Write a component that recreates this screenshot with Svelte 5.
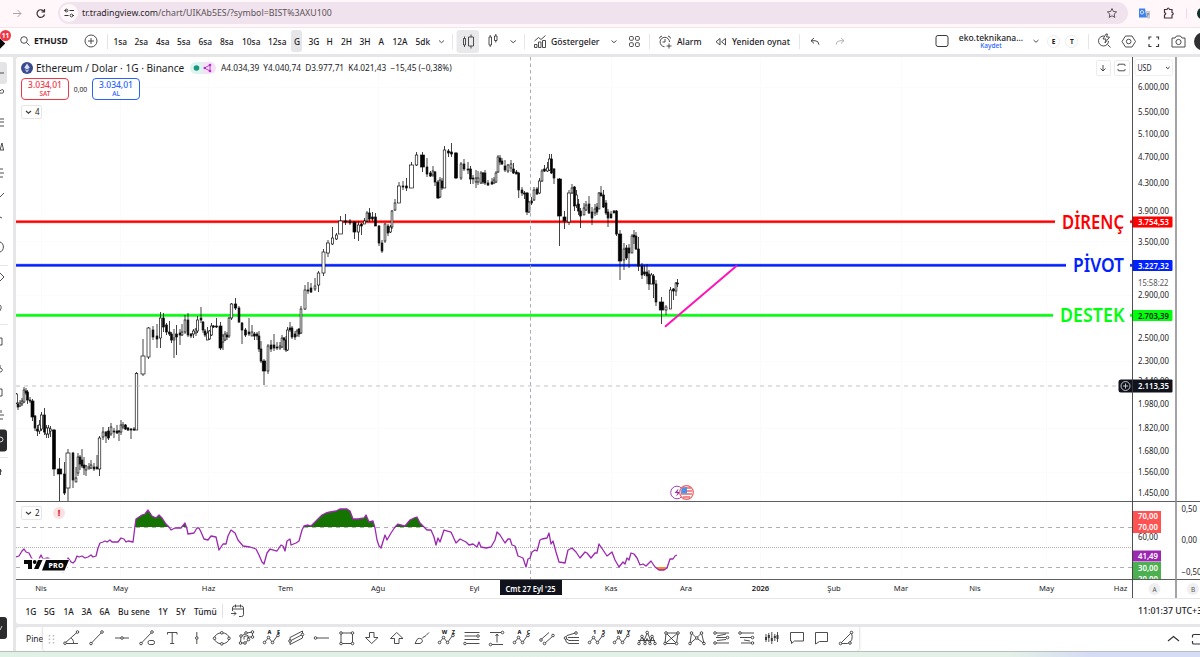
<script>
  const intervals = [
    ['1sa', 21], ['2sa', 21.5], ['4sa', 21], ['5sa', 21.5], ['6sa', 21.5], ['8sa', 22],
    ['10sa', 26], ['12sa', 26], ['G', 14.5], ['3G', 18], ['H', 14.5], ['2H', 18.5],
    ['3H', 19], ['A', 14], ['12A', 23], ['5dk', 22],
  ];

  const ranges = [
    ['1G', 18.5], ['5G', 19.5], ['1A', 18], ['3A', 18], ['6A', 18.5], ['Bu sene', 40],
    ['1Y', 18], ['5Y', 18], ['Tümü', 28],
  ];

  const prices = [
    ['6.000,00', 87], ['5.500,00', 112], ['5.100,00', 134], ['4.700,00', 157], ['4.300,00', 183],
    ['3.900,00', 210.5], ['3.500,00', 241.5], ['2.900,00', 295], ['2.500,00', 337.5],
    ['2.300,00', 361], ['1.980,00', 404], ['1.820,00', 428], ['1.680,00', 450.5],
    ['1.560,00', 472], ['1.450,00', 493],
  ];

  const months = [
    ['Nis', 41], ['May', 120.5], ['Haz', 208.5], ['Tem', 285.5], ['Ağu', 378], ['Eyl', 474.5],
    ['Kas', 611], ['Ara', 686], ['2026', 760.5], ['Şub', 834], ['Mar', 901], ['Nis', 975],
    ['May', 1046.5], ['Haz', 1120.5],
  ];

  const levels = [
    { name: 'DİRENÇ', price: '3.754,53', y: 221.7, end: 1055, x: 1062, w: 62, color: '#ff0000', soft: '#ff9a9a', ink: '#fff' },
    { name: 'PİVOT', price: '3.227,32', y: 265.3, end: 1066, x: 1073, w: 51, color: '#0022ff', soft: '#7f8cf8', ink: '#fff' },
    { name: 'DESTEK', price: '2.703,39', y: 315.3, end: 1053, x: 1060, w: 64.5, color: '#00ff0d', soft: '#79ee7e', ink: '#102010' },
  ];

  // x, high, top, bottom, low, filled, width
  const candles = [
    [16.5,393,394,403,404,0],[18,402,404,407,410,1],[20,400,403,406,407,0],[22,398,401,404,406,0],
    [24,387,390,402,403,0],[26,388,391,393,395,1],[27.5,390,392,400,404,1],[30,397,400,401,403,1],
    [32.5,399,401,417,421,1,3],[35,415,416,428,431,1],[37.5,425,429,431,436,1],[39.5,420,425,431,434,0],
    [41.5,412,415,429,431,0],[44.5,408,415,432,435,1],[46.5,425,428,434,438,0],[48.5,425,428,434,438,0],
    [50.5,426,429,431,437,0],[54,429,430,469,476,1,3],[59.5,458,469,474,501,1,4.5],[64.5,462,474,493,495,1],
    [68,449,453,488,501,0,4],[73,452,453,480,488,1],[76,467,478,482,482,0],[78,453,457,473,476,0],
    [80,455,457,464,470,1],[82,449,460,466,468,1],[84,457,465,468,475,1],[86,465,466,470,476,0],
    [89,463,467,469,469,0],[91,460,465,468,469,0],[94,463,467,469,471,1],[97,455,467,469,469,1],
    [99.5,436,438,469,476,0,2.5],[103,427,432,437,440,0],[106,431,432,436,443,1],[108.5,427,431,438,440,1],
    [111,423,427,434,436,0],[114,428,431,432,438,1],[117,425,431,433,434,1],[119,430,431,432,441,1],
    [121,420,425,432,435,0],[123,422,425,427,429,0],[125.5,424,425,429,430,1],[128,427,428,430,431,1],
    [131,428,429,430,439,1],[134,427,429,430,431,1],[136.5,372,373.5,430,430,0,2.5],[143,339,356,374,376,0,4],
    [148.5,327,328,357,359,0,3],[153,326,330,337,340,1],[157,324,336,339,348,1],[160.5,312,318,338,348,0],
    [163.5,313,318,327,332,1],[166.5,323,325,332,335,1],[169.5,321,332,334,336,1],[171.5,332,334,340,343,1],
    [174,329,338,340,358,0],[176.5,325,334,337,355,1],[180,329,333,335,345,1],[182,324,332,335,336,0],
    [185,315,320,332,334,0],[188,313,320,335,337,1],[191,333,334,336,338,1],[193.5,329,331,334,338,0],
    [196,328,329,333,336,0],[197.5,316,320,331,333,0],[201,307,318,320,323,1],[203,321,322,330,333,1],
    [205,329,331,335,337,1],[207.5,327,333,340,340,0],[209.5,330,331,339,340,0],[211.5,323,326,335,336,0],
    [213.5,325,326,327,328,1],[216.5,318,326,327,328,1],[220.5,322,326,348,350,1,3],[223,334,336,342,350,0],
    [225,331,334,340,341,0],[227,332,335,337,340,1],[229,317,318,336,338,0],[231.5,303,304,318,320,0,2.5],
    [235.5,298,304,308,310,1,2.5],[239,306,308,322,323,1],[242,322,323,330,344,1],[245.5,328,330,335,337,1],
    [249,318,332,334,336,1],[252,325,332,336,336,0],[254.5,332,334,336,340,1],[257,332,334,336,340,1],
    [259,331,336,349,352,1],[261,341,349,361,363,1],[264,359,361,371,385,1,3.5],[268,344,346,371,374,0],
    [271,340,345,349,352,1],[274,334,345,348,351,1],[277,342,347,348,350,1],[280,342,346,348,350,0],
    [282,335,338,347,348,0],[284,337,338,340,350,1],[286,336,340,350,352,1],[287.5,327,330,350,351,0],
    [290,322,328,330,332,1],[292,326,328,337,339,1],[295,331,334,337,340,1],[297,329,331,336,336,0],
    [299,328,329,334,337,1],[301,306,309,333,334,0],[305,285,290,309,310,0,2],[308,282,290,291,294,1],
    [311,283,288,292,293,1],[315,278,286,289,291,0],[318.5,271,273,285,292,0,2.5],[323.5,249,252,273,276,0,3],
    [328,240,243,253,257,0,3],[332.5,227,238,244,245,0],[336.5,233,235,239,240,0],[340.5,216,221,234,234,0,4],
    [345.5,214,221,222,225,1,3],[350,219,221,223,225,1],[354.5,221,222,232,239,1,3],[358.5,221,225,232,241,0],
    [361.5,223,224,226,235,1],[364.5,218,221,224,224,0],[367,211,213,221,222,0],[369.5,208,213,219,222,1],
    [372.5,212,217,219,221,1],[375.5,213,217,226,226,1],[379,225,226,243,246,1],[382,240,243,251,253,1],
    [385,223,224,241,243,0],[388,224,226,233,236,1],[390.5,225,227,232,233,0],[392,210,211,227,229,0],
    [395,199,203,210,211,0],[399,182,186,203,203,0,3],[403,181,186,187,190,1],[406.5,178,186,188,191,1],
    [411.5,162,165,188,188,0,4],[416.5,152,155,165,166,0,2.5],[422.5,152,155,167,172,1,4],[427,158,167,174,177,1],
    [430.5,171,173,176,177,1],[433,166,171,175,177,0],[435,171,172,182,186,1],[438,180,182,198,199,1,2.5],
    [440,177,180,197,198,0],[442,178,181,188,190,1],[444.5,146,150,188,188,0,2.5],[448.5,149,151,153,157,1],
    [451.5,143,152,154,157,1],[456,152,153,178,179,1,3],[461,162,164,178,180,0],[464,159,164,169,171,1],
    [468,162,169,170,174,1],[470.5,166,169,179,184,1],[473,175,178,179,184,1],[476,170,178,182,188,0],
    [478,171,178,182,185,0],[481,171,173,183,184,0],[483,172,173,182,184,1],[485,170,173,183,185,1],
    [488,180,183,185,186,1],[492,178,182,184,185,1],[494,177,180,183,184,0],[496,171,173,182,183,0],
    [498,155,157,172,173,0],[500,155,158,162,165,1],[502,158,161,164,165,1],[505,160,166,170,172,1],
    [508,164,165,171,173,0],[511,160,164,168,172,0],[513.5,163,169,173,174,1],[516.5,170,172,174,174,1],
    [518.7,172,173,190,198,1],[522,187,190,193,196,1],[524.5,191,193,194,199,1],[527,192,193,212,215,1,2.5],
    [529,201,202,212,213,0],[531.5,197,201,203,205,1],[534,187,190,200,201,0],[537,187,189,194,195,1],
    [539.5,178,181,193,194,0],[542,169,171,181,182,0],[544.5,165,169,171,172,1],[547.5,162,168,171,172,0],
    [549.5,154,159,170,171,0],[551.5,154,159,173,174,1],[554,168,169,178,184,1],[559.5,178,179,216,246,1,4],
    [564.5,211,217,221,229,1,3],[569,190,193,222,225,0,3],[572,184,188,193,194,0],[574.5,186,187,206,211,1],
    [576.5,190,195,205,208,0],[578.5,199,204,211,215,1],[580.5,208,211,216,228,1],[584,203,208,215,215,0],
    [586,201,205,210,211,0],[589,196,204,213,214,1],[592,207,212,218,225,1],[595,204,209,213,216,0],
    [597,203,207,212,215,1],[599,192,193,209,208,0],[601,186,193,196,196,1],[603.5,190,195,207,208,1],
    [606,200,203,213,215,1],[608,209,212,218,227,1],[611,211,214,218,218,1],[614,210,211,213,213,1],
    [616.5,210,211,234,236,1],[620,230,234,261,280,1,3.5],[624,243,249,260,270,0],[626.5,245,248,258,260,1],
    [629,244,248,253,268,1],[632,234,236,253,253,0],[634,230,235,237,244,1],[636,232,236,249,250,1],
    [638.5,237,249,266,271,1],[642,263,266,275,279,1],[644.5,265,272,274,276,1],[647,264,272,276,284,1],
    [649,270,274,284,290,1],[651.5,273,275,284,284,0],[653.5,274,276,284,298,1],[656,280,284,302,306,1],
    [661.5,297,302,310,324,1,4.5],[666,305,307,310,315,0,2],[670.5,287,290,309,309,0,2],[673.5,288,289,291,300,1],
    [676,282,283,291,296,0],[677.5,279,283,284,287,1],
  ];

  const rsi =
    '16,557 19,556 22,551 24,549 26,552 29,553 31,557 34,562 37,564 39,559 41,555 43,559 48,558 51,560 55,563 ' +
    '58,567 61,569 63,572 66,561 68,558 71,562 73,563 75,561 77,556 79,557 82,556 85,558 88,557 91,555 93,557 ' +
    '96,556 98,548 100,543 103,542 105,541 107,542 110,540 112,542 118,542 121,538 124,539 126,542 128,541 ' +
    '133,542 135,526 136,519 139,517 142,515 145,514 148,510 152,516 156,518 159,515 162,518 166,524 169,527 ' +
    '171,530 175,528 181,528 185,523 187,529 188,534 194,533 197,528 199,528 201,532 204,539 208,540 211,536 ' +
    '216,537 219,550 223,544 226,544 228,536 231,530 235,533 238,540 243,546 250,547 256,549 259,555 262,562 ' +
    '264,564 267,553 270,549 277,551 281,545 283,546 285,551 287,541 290,539 291,545 296,543 299,541 302,530 ' +
    '304,526 308,525 311,526 317,520 322,515 326,513 330,512 336,511 340,509 347,509 350,511 353,519 358,519 ' +
    '364,518 366,515 369,522 373,521 375,528 377,540 379,546 381,548 385,535 387,540 391,533 395,527 398,524 ' +
    '405,526 410,520 414,518 417,517 420,523 424,527 427,530 431,530 434,537 436,545 438,538 440,542 444,530 ' +
    '451,532 456,543 460,539 466,542 469,545 473,544 477,547 479,542 481,547 486,548 491,547 495,540 497,532 ' +
    '500,535 505,543 508,539 510,539 512,545 515,546 518,556 523,558 526,567 528,559 530,558 532,552 535,550 ' +
    '537,551 540,540 542,539 547,538 549,533 551,544 553,541 556,552 559,562 565,563 568,550 572,548 576,552 ' +
    '580,558 585,552 587,553 591,558 595,553 597,553 599,544 603,550 607,556 612,552 615,560 619,567 623,562 ' +
    '625,564 627,558 629,560 631,553 634,554 637,558 640,565 643,564 646,566 649,563 651,561 655,567 659,570 ' +
    '664,570 667,568 670,559 673,559 675,556 677,555';

  const zigzag = 'M5.5 16.5l4-5 4 5 5-7';
  const zigDots = [[5.5, 16.5], [9.5, 11.5], [13.5, 16.5], [19, 9.5]];

  // p: strokes, c: anchor points, t: letters above the shape
  const tools = [
    { p: 'M6 17L19 5.5M6 17.5h13M12 12c2 1 2.5 3 2.5 5', c: [[6, 17.2], [18.5, 6]] },
    { p: 'M7 17.5L18 6', c: [[7, 17.5], [18, 6]] },
    { p: 'M6 12h14', c: [[13, 12]] },
    { p: 'M7 17.5L18 6M15.5 14.5h3.5q1.5 0 1.5 2t-1.500 2h-3.5q-1.5 0-1.5-2t1.5-2', c: [[7, 17.5], [18, 6]] },
    { p: 'M8.5 8.5v-2h9.5v2M13.2 6.5v11M11.2 17.5h4', c: [] },
    { p: 'M12.8 6v12', c: [[12.8, 12]] },
    { p: 'M5.5 12.3a7.3 5.5 0 1 0 14.6 0a7.3 5.5 0 1 0-14.6 0', c: [[5.5, 12.3], [20, 12.3], [12.8, 6.8], [12.8, 17.8]] },
    { p: 'M6.500 17l.5-7 6-3 5.500-1v5h-4v3l-3.500 3zM10 13.500v-3l4-1v4', c: [[7, 10], [12, 7], [18.5, 6], [18.5, 11], [6.5, 17], [11, 17], [14.5, 13.5]] },
    { p: zigzag, c: zigDots, t: ['A', 'E'] },
    { p: 'M6 11.5L18.5 5v7L6 18.5zM6 15l12.500-6.500', c: [[6, 15], [18.5, 8.5]] },
    { p: 'M8 12h12', c: [[6.5, 12]] },
    { p: 'M7 7h11.5v10.500H7z', c: [[7, 7], [18.5, 7], [7, 17.5], [18.5, 17.5]] },
    { p: 'M10.500 6.5h4.500v5h4l-6.300 6-6.200-6h4z', c: [] },
    { p: 'M10.500 17.5h4.500v-5h4l-6.300-6-6.200 6h4z', c: [] },
    { p: 'M6 17.500c1-1 1-2.500 2-4s4-1.500 5 0 0 3.500-2 4H6M13 12.500c1-2 3-1.500 4-3l3-3', c: [] },
    { p: zigzag, c: zigDots, t: ['W', 'Z'] },
    { p: 'M5.5 6.5h15M5.5 10h12M5.5 13.5h15M7.5 17.5h13', c: [[19, 10], [6, 17.5]] },
    { p: 'M6 6.5h11M8 18.5h11M13 8.5v8M11.5 10l1.500-2 1.500 2', c: [[18.5, 6.5], [6.5, 18.5]] },
    { p: zigzag, c: zigDots, t: ['A', 'C'] },
    { p: 'M7 13.5l8-7M10 18l9-8', c: [[7, 14], [19, 9.5], [10.5, 17.5]] },
    { p: 'M6 12L8 9.500 18 6.500M7 12.500l3 2h10M6 12.500q1 5 4 5h10M9 11.500h11', c: [[6.5, 12], [17, 7]] },
    { p: zigzag, c: zigDots, t: ['1', '5'] },
    { p: zigzag, c: zigDots, t: ['W', 'Y'] },
    { p: 'M5 17.5l3-7 2 4 3.500-8 3 8 2-4 2.500 7M4 14.500h17M8 10.500l3 7 2-5 3 5 2-7', c: [[5, 17.5], [8, 10.5], [13.2, 6.5], [18, 10.5], [21, 17.5], [11, 17.5], [16, 17.5]] },
    { p: 'M7 7h12L17.500 17.500H6zM6 17.500L19 7M7 7l10.500 10.500', c: [[7, 7], [19, 7], [6, 17.5], [17.5, 17.5]] },
    { p: 'M6 17.5L7.500 7l5 5 5-5 2.500 10.500-7.500-5.500z', c: [[6, 17.5], [7.5, 7], [12.8, 12], [17.5, 7], [20, 17.5]] },
    { p: 'M6 7h14M7 11.500h13M6 17h14M8 10l9-2M8 14.500l9-1', c: [[6, 7], [18.5, 11.5], [6, 17]] },
    { p: 'M6 7h14M6 11.500h14M7 17h13M10 14l6 1', c: [[6, 7], [18.5, 11.5], [18.5, 17]] },
    { p: 'M7 8v8M9.800 7v9M12.800 6v12M15.800 8v7M18.500 6v10', c: [], bars: true },
    { p: 'M6.500 6.500h13v8.500h-9l-3 2.500v-2.500h-1z', c: [] },
    { p: 'M6.500 6.500h12v9h-8l-4 2.500z', c: [] },
    { p: 'M17.500 6.500L6.500 17.500h7q6.500-2 4-11', c: [[17.5, 6.5], [6.5, 17.5], [16, 17]] },
  ];

  // glyphs of the left rail are cut by the window edge; y is their centre
  const rail = [
    ['M0 4q3-3 3.500 0T0 6', 92], ['M0 2h4M0 5h4M0 9h4', 122], ['M0 8l2-7 1.500 7M0 8h4', 147],
    ['M0 1h3M0 5h4M0 9h3', 173], ['M0 6l4-4', 196], ['M0 4l2 1', 218], ['M0 0c4.500 1 4.500 9 0 10', 247],
    ['M0 1l4 4-4 4', 277], ['M0 2c2 2 1 4 0 5h1', 308], ['M0 2h2v7H0', 341], ['M0 1v3c3 0 3 4 0 4', 369],
    ['M0 1h2v7H0', 393], ['M1 0v3M0 5h4M0 9h3', 415],
  ];
</script>

<div class="screen">
  <header class="browser">
    <svg class="nav" viewBox="0 0 56 28">
      <path d="M13 13.500h8M17.500 10l3.500 3.500-3.500 3.500" stroke="#a39a9f" />
      <path d="M44 11.500a3.800 3.800 0 1 0 .5 3M44.500 9v3h-3" stroke="#3c3338" stroke-width="1.200" />
    </svg>
    <div class="address">
      <svg class="site" viewBox="0 0 18 18">
        <circle cx="9" cy="9" r="9" fill="#fff8fa" />
        <path d="M4.500 6.500h2M9.500 6.500h4.500M4.500 11.500h4M12.500 11.500h1.500" stroke="#333" stroke-width="1.200" />
        <circle cx="6.500" cy="6.500" r="1.400" stroke="#333" /><circle cx="11.500" cy="11.500" r="1.400" stroke="#333" />
      </svg>
      <span class="url">tr.tradingview.com<i>/chart/UIKAb5ES/?symbol=BIST%3AXU100</i></span>
      <svg class="star" viewBox="0 0 12 12"><path d="M6 1.500l1.400 3 3.200.4-2.400 2.200.6 3.300L6 8.800l-2.800 1.600.6-3.300L1.400 4.900l3.200-.4z" stroke="#4d4248" /></svg>
    </div>
    <svg class="ext" viewBox="0 0 72 28">
      <path d="M11 8.500h6l2 9h-8z" fill="#3c82ee" />
      <path d="M17 11h5v7.500h-3z" fill="#c8cbd1" />
      <circle cx="14" cy="12.300" r="1.700" stroke="#fff" stroke-width=".8" />
      <path d="M18.500 14h3M20 13v1q0 2-1.500 3" stroke="#607d9c" stroke-width=".7" />
      <path d="M36.500 9.500h2.500q1.200-3 2.500 0h2.500v3q2.500 1 0 2.500v3h-7.500v-3q2.500-1.300 0-2.500z" stroke="#4b2f3c" stroke-width="1.200" />
      <path d="M58.500 8.500v10" stroke="#f9cfe4" />
      <circle cx="75" cy="13.500" r="6" fill="#12302c" />
    </svg>
  </header>

  <nav class="topbar">
    <div class="avatar"><b>11</b></div>
    <button class="symbol">
      <svg width="10" height="10" viewBox="0 0 10 10"><circle cx="4" cy="4" r="3.300" /><path d="M6.500 6.500l3 3" /></svg>
      ETHUSD
    </button>
    <svg class="plus" width="14" height="14" viewBox="0 0 14 14"><circle cx="7" cy="7" r="6" /><path d="M4 7h6M7 4v6" /></svg>
    <span class="sep"></span>
    <div class="intervals">
      {#each intervals as [label, width]}
        <span class="interval" class:on={label === 'G'} style="width: {width}px">{label}</span>
      {/each}
    </div>
    <svg class="tail" viewBox="437 29 430 25">
      <path d="M439 40.500l2.500 2.200 2.500-2.200" />
      <path d="M452.500 34v15M524.500 34v15M649.500 34v15M799.500 34v15" stroke="#e3e3e5" />
      <rect x="456.500" y="30" width="22.500" height="23" rx="3" fill="#e9e9eb" />
      <path d="M463.500 38.500h2v6.500h-2zM464.500 36.500v2M464.500 45v2M468.500 37h5v9h-5zM471 34.500v2.500M471 46v2.500" />
      <path d="M489 37h2.500v8H489zM490.200 35v2M490.200 45v2M494.500 36h2.500v4.500h-2.500zM495.800 34v2M495.800 40.500v2" />
      <path d="M510.500 40.500l2.700 2.200 2.700-2.200" />
      <path d="M534.500 47.500v-3h2.500v3zM538.500 47.500v-5.500h2.500v5.500zM542.500 47.500v-7h3v7zM534.500 41l4-3.500 2.500 2 4.500-4" />
      <path d="M611.500 40.500l2.500 2.200 2.500-2.200" />
      <rect x="629.500" y="36.500" width="3.800" height="3.800" rx="1" /><rect x="635.500" y="36.500" width="3.800" height="3.800" rx="1" />
      <rect x="629.500" y="42.700" width="3.800" height="3.800" rx="1" /><rect x="635.500" y="42.700" width="3.800" height="3.800" rx="1" />
      <path d="M669.500 42a4.700 4.700 0 1 0-5 4.700M665 39v3h-2.500M659.500 38.500q0-2 2.500-2.500M668 36q2.500.5 2.500 2.500M669 43.500v5M666.500 46h5" />
      <path d="M720 38.500v6.500l-4-3.200zM725.500 38.500v6.500l-4-3.200z" />
      <path d="M814 38l-3 2.700 3 2.700M811 40.700h4q3.500 0 4 4" />
      <path d="M841 38l3 2.700-3 2.700M844 40.700h-4q-3.500 0-4 4" stroke="#aaa" />
      <g class="words">
        <text x="551" y="45" textLength="48.500" lengthAdjust="spacingAndGlyphs">Göstergeler</text>
        <text x="677" y="45" textLength="24.500" lengthAdjust="spacingAndGlyphs">Alarm</text>
        <text x="732" y="45" textLength="58" lengthAdjust="spacingAndGlyphs">Yeniden oynat</text>
      </g>
    </svg>
    <div class="right">
      <svg width="14" height="14" viewBox="0 0 14 14"><rect x="1" y="1.500" width="12" height="11" rx="2" stroke="#222" /></svg>
      <div class="layout"><span>eko.teknikana...</span><small>Kaydet</small></div>
      <svg class="chev" width="6" height="5" viewBox="0 0 6 5"><path d="M.5 1l2.500 2.300L5.500 1" /></svg>
      <span class="round">E</span><span class="round">T</span>
      <svg class="actions" viewBox="1088 29 112 25">
        <path d="M1088.500 34v15" stroke="#e3e3e5" />
        <path d="M1104 36a5 5 0 1 0 4.500 5M1107.500 44.500l3 3M1106 34l-3 5h3l-1 4 4.500-6h-3l1-3z" />
        <path d="M1125.500 36h6.500l3.500 5.500-3.500 5.500h-6.500l-3.500-5.500z" /><circle cx="1128.700" cy="41.500" r="2.300" />
        <path d="M1149 39.500V37h2.500M1156 37h2.500v2.500M1158.500 44v2.500H1156M1151.500 46.500H1149V44" stroke-width="1.200" />
        <path d="M1172 38h3l1.500-2h4l1.500 2h3v9h-13z" /><circle cx="1178.500" cy="42" r="2.600" />
        <circle cx="1203" cy="41.500" r="9" fill="#303033" />
      </svg>
    </div>
  </nav>

  <div class="body">
    <aside>
      <svg viewBox="0 57 13 594">
        <rect x="-6" y="62" width="13" height="22" rx="3" fill="#e4e4e6" />
        <path d="M0 73h4" />
        {#each rail as [d, y]}
          <path {d} transform="translate(0 {y - 5})" />
        {/each}
        <path d="M0 265.500h8M0 324.500h8M0 457.500h8" stroke="#e3e3e5" />
        <rect x="-5" y="429.500" width="12" height="22" rx="3" fill="#2b2b2e" />
        <path d="M0 437q3 0 3 2.500T0 442" stroke="#eee" />
        <path d="M0 471h2M.5 469v6" />
        <rect x="-5" y="617" width="12" height="22" rx="3" fill="#2b2b2e" />
        <path d="M0 630l2-4" stroke="#ddd" />
      </svg>
    </aside>

    <main>
      <section class="chart">
        <svg class="plot" viewBox="16 57 1116 541">
          <defs>
            <clipPath id="over"><rect x="16" y="502" width="1116" height="25" /></clipPath>
            <clipPath id="pane"><rect x="16" y="57" width="1116" height="444" /></clipPath>
          </defs>
          <path d="M41.500 57v522M120.500 57v522M208.500 57v522M378.500 57v522M474.500 57v522M611.500 57v522M760.500 57v522M901.500 57v522M1046.500 57v522M16 87.500h1116M16 241.500h1116M16 295.500h1116M16 361.500h1116M16 428.500h1116M16 472.500h1116" stroke="#fafafa" />
          {#each levels as l}
            <path d="M16 {l.y}H{l.end}M1130 {l.y}h2" stroke={l.soft} stroke-width="3.200" />
            <path d="M16 {l.y}H{l.end}M1130 {l.y}h2" stroke={l.color} stroke-width="2" />
            <text class="level" x={l.x} y={l.y + 7} textLength={l.w} lengthAdjust="spacingAndGlyphs" fill={l.color}>{l.name}</text>
          {/each}
          <g clip-path="url(#pane)">
            {#each candles as [x, high, top, bottom, low, filled, width = 1.8]}
              <path d="M{x} {high}V{top}M{x} {bottom}V{low}" stroke="#111" stroke-width=".8" />
              <rect x={x - width / 2} y={top} width={width} height={Math.max(bottom - top, .8)} fill={filled ? '#000' : '#fff'} stroke="#111" stroke-width=".7" />
            {/each}
          </g>
          <path d="M665 326.700L737 265.500" stroke="#ff12b8" stroke-width="2" />

          <path d="M530.500 57v522" stroke="#a3a5ab" stroke-dasharray="3.500 3" />
          <path d="M16 386h1103" stroke="#bcbcc4" stroke-dasharray="4 4" />

          <circle cx="677" cy="492.500" r="6.300" fill="#fff" stroke="#9433ad" />
          <path d="M678.500 488.500l-4 4.500h3l-1.500 3.500 4.500-4.500h-3z" fill="#9433ad" />
          <circle cx="686.500" cy="492.500" r="6.800" fill="#fff" stroke="#f25d62" stroke-width="1.200" />
          <path d="M682 488h9M681.500 491h10.500M681 494h11M683 497h7" stroke="#f0646a" stroke-width="1.400" />
          <path d="M681.500 488.500q2-1.500 5.500-1.500v6.500h-6z" fill="#4a93e6" />

          <path d="M16 527.500h1116M16 567.500h1116" stroke="#a5a5a8" stroke-dasharray="4 4" />
          <path d="M16 547.500h1116" stroke="#aaa" stroke-dasharray="1 1" />
          <polygon points="16,527 {rsi} 677,527" fill="#157300" clip-path="url(#over)" />
          <polygon points="655,567 659,570 664,570 667,567" fill="#f58b26" />
          <polyline points={rsi} stroke="#9c27b0" stroke-width="1.300" stroke-linejoin="round" />
          <path d="M16 501.500h1116M16 579.500h1116" stroke="#4c4c4e" />

          <path d="M23 558.500h44l3 2-5 12H23z" fill="#fff" />
          <path d="M24 560h8v9h-4v-5h-4zM38 560h4.500l-4 9H34z" fill="#080808" />
          <circle cx="34.700" cy="562" r="1.900" fill="#080808" />
          <path d="M46 560h23l-4.500 10.500H42z" fill="#080808" />
          <text x="48.500" y="567.800" class="pro" textLength="15">PRO</text>

          {#each months as [m, x]}
            <text class="month" class:year={m === '2026'} {x} y="591.300">{m}</text>
          {/each}
          <rect x="500" y="580" width="62" height="15" fill="#10121c" />
          <text class="cursor" x="505.500" y="591.500" textLength="50" lengthAdjust="spacingAndGlyphs">Cmt 27 Eyl '25</text>
          <path d="M1121 379.500h11v13h-11q-2.500 0-2.500-2.500v-8q0-2.500 2.500-2.500" fill="#10121c" />
          <circle cx="1125.500" cy="386" r="4.500" stroke="#d5d5da" />
          <path d="M1123 386h5M1125.500 383.500v5" stroke="#d5d5da" />
        </svg>

        <div class="legend">
          <div class="title">
            <svg width="12" height="12" viewBox="0 0 12 12"><circle cx="6" cy="6" r="6" fill="#394a8f" /><path d="M6 1.500l2.800 4.300L6 7.500 3.200 5.800zM3.500 7L6 8.500 8.500 7 6 10.500z" fill="#d7ddf5" /></svg>
            <span class="name">Ethereum / Dolar · 1G · Binance</span>
            <svg width="26" height="12" viewBox="0 0 26 12">
              <path d="M6 0h7v12H6A6 6 0 0 1 6 0z" fill="#def2ee" /><path d="M13 0h7a6 6 0 0 1 0 12h-7z" fill="#f5e1f7" />
              <circle cx="6.500" cy="6" r="2.800" fill="#149980" />
              <path d="M20 3l-5.500 3 5.500 3z" stroke="#b22fc4" /><circle cx="20" cy="3" r="1.300" fill="#b22fc4" /><circle cx="14.800" cy="6" r="1.300" fill="#b22fc4" /><circle cx="20" cy="9" r="1.300" fill="#b22fc4" />
            </svg>
            <span class="ohlc">A4.034,39&ensp;Y4.040,74&ensp;D3.977,71&ensp;K4.021,43&ensp;−15,45 (−0,38%)</span>
          </div>
          <div class="quotes">
            <button class="sell">3.034,01<small>SAT</small></button>
            <span>0,00</span>
            <button class="buy">3.034,01<small>AL</small></button>
          </div>
          <button class="fold"><svg width="7" height="5" viewBox="0 0 7 5"><path d="M1 1l2.500 2.300L6 1" stroke-width="1.200" /></svg>4</button>
        </div>
        <div class="rsi-legend">
          <button class="fold"><svg width="7" height="5" viewBox="0 0 7 5"><path d="M1 1l2.500 2.300L6 1" stroke-width="1.200" /></svg>2</button>
          <span class="warn">!</span>
        </div>
        <div class="corner">
          <button><svg width="8" height="8" viewBox="0 0 8 8"><path d="M4 1v6M1.500 4.500L4 7l2.500-2.500" /></svg></button>
          <button><svg width="9" height="9" viewBox="0 0 9 9"><path d="M1 3V2q0-.8 1-.8h5q1 0 1 .8v1M1 6v1q0 .8 1 .8h5q1 0 1-.8V6" /></svg></button>
        </div>

        <svg class="axis" viewBox="1132 57 68 541">
          <rect x="1135" y="59.500" width="37.500" height="16" rx="2" fill="#fff" stroke="#ececee" />
          <text class="unit" x="1137.500" y="71" textLength="14" lengthAdjust="spacingAndGlyphs">USD</text>
          <path d="M1166 67l1.800 1.700 1.800-1.700" stroke="#222" />
          {#each prices as [p, y]}
            <text class="price" x="1138" y={y + 3} textLength="31" lengthAdjust="spacingAndGlyphs">{p}</text>
          {/each}
          <text class="price soft" x="1138" y="286" textLength="30.500" lengthAdjust="spacingAndGlyphs">15:58:22</text>
          <text class="price" x="1138" y="384" textLength="31" lengthAdjust="spacingAndGlyphs">2.140,00</text>
          {#each levels as l}
            <rect x="1132" y={l.y - 5.2} width="40.500" height="11" rx="1" fill={l.color} />
            <text class="tag" x="1138" y={l.y + 3.3} textLength="31" lengthAdjust="spacingAndGlyphs" fill={l.ink}>{l.price}</text>
          {/each}
          <rect x="1132" y="379.500" width="40.500" height="13" rx="1" fill="#10121c" />
          <text class="tag" x="1138" y="389" textLength="31" lengthAdjust="spacingAndGlyphs" fill="#fff">2.113,35</text>

          <text class="price" x="1138" y="539.500" textLength="20" lengthAdjust="spacingAndGlyphs">60,00</text>
          <path d="M1132 511h29v22h-29z" fill="#ff5252" />
          <path d="M1132 550.500h29v11h-29z" fill="#9c27b0" />
          <path d="M1132 562h29v17.500h-29z" fill="#4caf50" />
          <text class="tag" x="1138" y="519" textLength="20" lengthAdjust="spacingAndGlyphs" fill="#fff">70,00</text>
          <text class="tag" x="1138" y="530" textLength="20" lengthAdjust="spacingAndGlyphs" fill="#fff">70,00</text>
          <text class="tag" x="1138" y="558.500" textLength="20" lengthAdjust="spacingAndGlyphs" fill="#fff">41,49</text>
          <text class="tag" x="1138" y="570.500" textLength="20" lengthAdjust="spacingAndGlyphs" fill="#fff">30,00</text>
          <text class="tag" x="1138" y="581.500" textLength="20" lengthAdjust="spacingAndGlyphs" fill="#fff">20,00</text>
          <path d="M1132 580h68v18h-68z" fill="#fff" />
          <text class="price" x="1181.500" y="511.500" textLength="15.500" lengthAdjust="spacingAndGlyphs">0,50</text>
          <text class="price" x="1181.500" y="543" textLength="15.500" lengthAdjust="spacingAndGlyphs">0,00</text>
          <text class="price" x="1181.500" y="575" textLength="20" lengthAdjust="spacingAndGlyphs">−0,50</text>
          <circle cx="1154.500" cy="589" r="6" fill="#efeff1" /><text class="scale" x="1154.500" y="591.800">A</text>
          <circle cx="1193" cy="589" r="6" fill="#efeff1" /><text class="scale" x="1193" y="591.800">B</text>
          <path d="M1132 501.500h68M1132 579.500h68" stroke="#4c4c4e" />
          <path d="M1132.500 57v541" stroke="#3c3c3e" />
          <path d="M1176 57v541" stroke="#8d8d8f" stroke-width="1.600" />
        </svg>
      </section>

      <section class="ranges">
        {#each ranges as [label, width]}
          <span style="width: {width}px">{label}</span>
        {/each}
        <svg width="14" height="14" viewBox="0 0 14 14"><path d="M1.500 7V4q0-2 2-2h7q2 0 2 2v6.500q0 2-2 2H8M1.500 5h11M4.500.5v3M9.500.5v3M0 9.500h5M3 7.500l2 2-2 2" /></svg>
        <span class="clock">11:01:37 UTC+3</span>
      </section>

      <section class="tools">
        <span class="pine">Pine</span>
        <div class="drawbar">
          <svg class="grip" width="10" height="10" viewBox="0 0 10 10"><path d="M2.500 1v1.500M2.500 4.500V6M2.500 8v1.500M6.500 1v1.500M6.500 4.500V6M6.500 8v1.500" stroke="#bbb" stroke-width="1.500" /></svg>
          {#each tools as tool}
            <svg class="tool" viewBox="0 0 25 24">
              <path d={tool.p} />
              {#if tool.bars}<path d="M7 11v3M9.800 9v3M12.800 12v3M15.800 10v2M18.500 9v4" stroke-width="2" />{/if}
              {#each tool.c as [x, y]}<circle cx={x} cy={y} r="1.300" fill="#fff" stroke="#3a3a3d" stroke-width=".9" />{/each}
              {#if tool.t}<text x="10.500" y="7.500">{tool.t[0]}</text><text x="19.500" y="7.500">{tool.t[1]}</text>{/if}
            </svg>
          {/each}
        </div>
        <svg class="panel" width="40" height="24" viewBox="0 0 40 24">
          <path d="M8 14l5.500-4.500L19 14" stroke="#333" stroke-width="1.200" />
          <path d="M32.500 10.500v-2q0-1 1.500-1h8M32.500 14v2q0 1 1.500 1h8" stroke="#333" stroke-width="1.200" />
        </svg>
      </section>
    </main>
  </div>
  <footer></footer>
</div>

<style>
  :global(body) {
    margin: 0;
    overflow: hidden;
  }
  .screen {
    width: 1200px;
    height: 657px;
    display: flex;
    flex-direction: column;
    overflow: hidden;
    background: #e6e6e8;
    color: #1c1c1f;
    font-family: "Noto Sans", "Open Sans", sans-serif;
    font-size: 8.3px;
  }
  svg {
    display: block;
    flex: none;
    fill: none;
    stroke: #3a3a3d;
    stroke-width: .9;
  }
  svg [fill]:not([stroke]),
  svg text {
    stroke: none;
  }
  svg text:not([fill]) {
    fill: #1c1c1f;
  }
  button {
    margin: 0;
    padding: 0;
    border: none;
    background: none;
    font: inherit;
    color: inherit;
  }

  .browser {
    flex: none;
    display: flex;
    height: 28px;
    background: #fff7f9;
    border-bottom: 1px solid #f6e2e9;
    box-sizing: border-box;
  }
  .nav {
    width: 56px;
    height: 28px;
  }
  .address {
    display: flex;
    align-items: center;
    width: 1070px;
    height: 22px;
    margin: 2px 0 0 2px;
    padding-left: 2px;
    box-sizing: border-box;
    border-radius: 11px;
    background: #f0e3ed;
  }
  .site {
    width: 18px;
    height: 18px;
  }
  .url {
    margin-left: 4px;
    font-size: 8.8px;
    color: #2c2529;
  }
  .url i {
    font-style: normal;
    color: #5d5259;
  }
  .star {
    width: 12px;
    height: 12px;
    margin: 0 10px 0 auto;
  }
  .ext {
    width: 72px;
    height: 28px;
  }

  .topbar {
    flex: none;
    display: flex;
    align-items: center;
    height: 26px;
    background: #fff;
    overflow: hidden;
  }
  .avatar {
    position: relative;
    width: 21px;
    height: 26px;
  }
  .avatar::before {
    content: '';
    position: absolute;
    left: -8px;
    top: 10px;
    width: 11px;
    height: 11px;
    background: #0a0a0a;
    transform: rotate(45deg);
  }
  .avatar b {
    position: absolute;
    left: 0;
    top: 2px;
    width: 11px;
    height: 11px;
    border-radius: 6px;
    background: #f23645;
    color: #fff;
    font-size: 6.5px;
    line-height: 11px;
    text-align: center;
  }
  .symbol {
    display: flex;
    align-items: center;
    gap: 3.5px;
    width: 65px;
    font-size: 8.6px;
    font-weight: 700;
  }
  .sep {
    width: 1px;
    height: 15px;
    margin: 0 6px 0 9px;
    background: #e3e3e5;
  }
  .intervals {
    display: flex;
    align-items: center;
    width: 323px;
    font-size: 8.4px;
    font-weight: 500;
  }
  .interval {
    flex: none;
    white-space: nowrap;
  }
  .interval.on {
    position: relative;
    z-index: 0;
  }
  .interval.on::before {
    content: '';
    position: absolute;
    z-index: -1;
    left: -2.5px;
    top: -5.5px;
    width: 11px;
    height: 22px;
    border-radius: 3px;
    background: #e6e6e8;
  }
  .tail {
    width: 430px;
    height: 25px;
    margin-left: 1px;
  }
  .words text {
    font-size: 8.6px;
    font-weight: 500;
  }
  .right {
    display: flex;
    align-items: center;
    margin-left: 68px;
  }
  .layout {
    display: flex;
    flex-direction: column;
    align-items: center;
    width: 65px;
    margin: 0 10px 0 9px;
    line-height: 9px;
    font-size: 8.5px;
    font-weight: 500;
    white-space: nowrap;
  }
  .layout small {
    font-size: 6.5px;
    line-height: 7px;
    color: #2962ff;
  }
  .chev {
    margin-right: 3px;
  }
  .round {
    width: 13px;
    height: 13px;
    margin-left: 4.5px;
    border: 1px solid #ececee;
    border-radius: 50%;
    box-sizing: border-box;
    font-size: 6.5px;
    font-weight: 700;
    line-height: 11px;
    text-align: center;
  }
  .round + .round {
    margin-left: 5.5px;
  }
  .actions {
    width: 112px;
    height: 25px;
    margin-left: 9.5px;
  }

  .body {
    flex: none;
    display: flex;
    gap: 3px;
    height: 594px;
    margin-top: 3px;
  }
  aside {
    width: 13px;
    background: #fff;
  }
  aside svg {
    width: 13px;
    height: 594px;
  }
  main {
    display: flex;
    flex-direction: column;
    width: 1184px;
  }

  .chart {
    position: relative;
    display: flex;
    height: 541px;
    background: #fff;
    border-radius: 3px 0 0 0;
  }
  .plot {
    width: 1116px;
    height: 541px;
  }
  .axis {
    width: 68px;
    height: 541px;
  }
  .level {
    font-size: 19px;
    font-weight: 600;
  }
  .month {
    font-size: 7.6px;
    text-anchor: middle;
  }
  .month.year {
    font-weight: 600;
  }
  svg text.cursor:not([fill]) {
    font-size: 8px;
    font-weight: 600;
    fill: #fff;
  }
  svg text.pro:not([fill]) {
    font-size: 7px;
    font-weight: 800;
    fill: #fff;
  }
  .price,
  .tag,
  .unit {
    font-size: 8.2px;
  }
  .tag {
    font-weight: 600;
  }
  svg text.soft:not([fill]) {
    fill: #555;
  }
  svg text.scale:not([fill]) {
    font-size: 6.5px;
    text-anchor: middle;
    fill: #555;
  }

  .legend {
    position: absolute;
    left: 5px;
    top: 4px;
    display: flex;
    flex-direction: column;
    align-items: flex-start;
  }
  .title {
    display: flex;
    align-items: center;
    height: 13px;
    white-space: nowrap;
  }
  .name {
    width: 154px;
    margin-left: 3px;
    font-size: 10.1px;
  }
  .ohlc {
    margin-left: 5px;
    font-size: 8.3px;
  }
  .quotes {
    display: flex;
    align-items: center;
    margin-top: 4px;
  }
  .quotes > span {
    width: 23px;
    font-size: 6.8px;
    text-align: center;
  }
  .sell,
  .buy {
    display: flex;
    flex-direction: column;
    align-items: center;
    width: 48px;
    height: 22px;
    box-sizing: border-box;
    border: 1px solid #f23645;
    border-radius: 4px;
    color: #f23645;
    font-size: 8.5px;
    line-height: 11px;
    font-weight: 500;
  }
  .quotes small {
    font-size: 6.5px;
    line-height: 8px;
  }
  .buy {
    border-color: #2962ff;
    color: #2962ff;
  }
  .fold {
    display: flex;
    align-items: center;
    gap: 3px;
    width: 21px;
    height: 14px;
    margin-top: 5px;
    padding-left: 3px;
    box-sizing: border-box;
    border: 1px solid #e6e6e8;
    border-radius: 2px;
    background: #fff;
    font-size: 8px;
    line-height: 12px;
  }
  .rsi-legend {
    position: absolute;
    left: 5px;
    top: 444px;
    display: flex;
    align-items: flex-end;
    gap: 11px;
  }
  .warn {
    width: 12px;
    height: 12px;
    margin-bottom: 1px;
    border-radius: 50%;
    background: #fde0e2;
    color: #d31f2c;
    font-size: 9px;
    font-weight: 800;
    line-height: 12px;
    text-align: center;
  }
  .corner {
    position: absolute;
    left: 1079.5px;
    top: 3px;
    display: flex;
    gap: 3px;
  }
  .corner button {
    display: flex;
    align-items: center;
    justify-content: center;
    width: 15.5px;
    height: 15.5px;
    border: 1px solid #ececee;
    border-radius: 2px;
    box-sizing: border-box;
  }

  .ranges {
    display: flex;
    align-items: center;
    height: 25px;
    margin-top: 1px;
    padding-left: 9.5px;
    background: #fff;
    border-radius: 0 0 0 3px;
    font-size: 8.4px;
    font-weight: 500;
    white-space: nowrap;
  }
  .ranges svg {
    padding-left: 8px;
    border-left: 1px solid #e3e3e5;
  }
  .clock {
    margin-left: auto;
    width: 62px;
    overflow: hidden;
    font-size: 8.8px;
  }

  .tools {
    display: flex;
    align-items: center;
    height: 25px;
    margin-top: 3px;
    background: #fff;
    border-radius: 3px 0 0 0;
    overflow: hidden;
  }
  .pine {
    width: 17px;
    padding-left: 10px;
    overflow: hidden;
    font-size: 8.5px;
  }
  .drawbar {
    display: flex;
    align-items: center;
    height: 25px;
    width: 816px;
    border-radius: 3px;
    box-shadow: 0 0 3px #bbb;
  }
  .grip {
    margin: 0 2px 0 3.5px;
  }
  .tool {
    width: 25px;
    height: 24px;
    margin-bottom: 1px;
  }
  .tool text {
    font-size: 5.5px;
    font-weight: 800;
    text-anchor: middle;
  }
  .panel {
    margin-left: auto;
  }
  footer {
    flex: 1;
    border-top: 1px solid #b9bfbb;
    background: linear-gradient(90deg, #e0f1e6, #e4f1e8 84%, #d5dcf5 91%, #d5dcf5);
  }
</style>
